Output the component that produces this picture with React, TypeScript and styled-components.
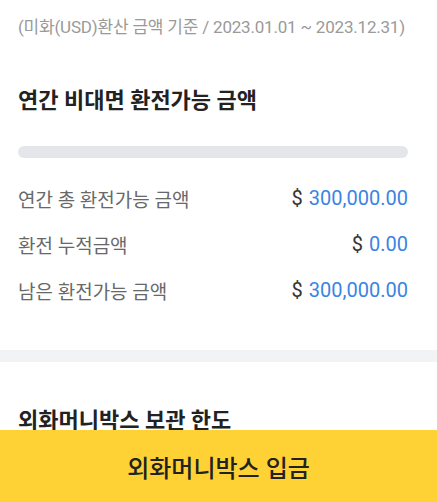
import React from 'react';
import styled, { createGlobalStyle } from 'styled-components';

const GlobalStyle = createGlobalStyle`
  body {
    margin: 0;
    background: #fff;
    font-family: Roboto, "Noto Sans CJK KR", sans-serif;
  }
`;

type LimitRow = {
  label: string;
  amount: string;
};

const rows: LimitRow[] = [
  { label: '연간 총 환전가능 금액', amount: '300,000.00' },
  { label: '환전 누적금액', amount: '0.00' },
  { label: '남은 환전가능 금액', amount: '300,000.00' },
];

const App: React.FC = () => {
  return (
    <>
      <GlobalStyle />
      <Page>
        <Section>
          <Caption>(미화(USD)환산 금액 기준 / 2023.01.01 ~ 2023.12.31)</Caption>
          <Heading>연간 비대면 환전가능 금액</Heading>
          <Track>
            <Fill style={{ width: '0%' }} />
          </Track>
          <List>
            {rows.map((row) => (
              <Row key={row.label}>
                <Label>{row.label}</Label>
                <Value>
                  <Currency>$</Currency>
                  <Amount>{row.amount}</Amount>
                </Value>
              </Row>
            ))}
          </List>
        </Section>
        <Divider />
        <Section>
          <SubHeading>외화머니박스 보관 한도</SubHeading>
        </Section>
      </Page>
      <DepositButton>외화머니박스 입금</DepositButton>
    </>
  );
};

const Page = styled.div`
  display: flex;
  flex-direction: column;
  padding-bottom: 80px;
`;

const Section = styled.section`
  display: flex;
  flex-direction: column;
  padding: 0 29px 0 18px;
`;

const Caption = styled.p`
  margin: 15px 0 0;
  font-size: 17px;
  letter-spacing: -0.2px;
  line-height: 24px;
  color: #9a9a9a;
  white-space: nowrap;
`;

const Heading = styled.h2`
  margin: 48px 0 0;
  font-size: 22px;
  font-weight: 700;
  line-height: 28px;
  color: #222;
`;

const Track = styled.div`
  margin-top: 31px;
  height: 12px;
  border-radius: 6px;
  background: #e4e6ea;
  overflow: hidden;
`;

const Fill = styled.div`
  height: 100%;
  background: #3b82e0;
`;

const List = styled.div`
  display: flex;
  flex-direction: column;
  gap: 20px;
  margin-top: 27px;
`;

const Row = styled.div`
  display: flex;
  align-items: center;
  justify-content: space-between;
  height: 26px;
`;

const Label = styled.span`
  font-size: 19px;
  color: #686868;
`;

const Value = styled.span`
  display: flex;
  align-items: baseline;
  gap: 6px;
  font-size: 20px;
`;

const Currency = styled.span`
  color: #333;
`;

const Amount = styled.span`
  color: #3a84e2;
`;

const Divider = styled.div`
  margin-top: 47px;
  height: 12px;
  background: #f2f3f5;
`;

const SubHeading = styled.h2`
  margin: 45px 0 0;
  font-size: 22px;
  font-weight: 700;
  line-height: 28px;
  color: #222;
`;

const DepositButton = styled.button`
  position: fixed;
  left: 0;
  right: 0;
  bottom: 0;
  height: 72px;
  border: none;
  background: #fed134;
  font-family: Roboto, "Noto Sans CJK KR", sans-serif;
  font-size: 24px;
  font-weight: 500;
  color: #222;
  cursor: pointer;
`;

export default App;
